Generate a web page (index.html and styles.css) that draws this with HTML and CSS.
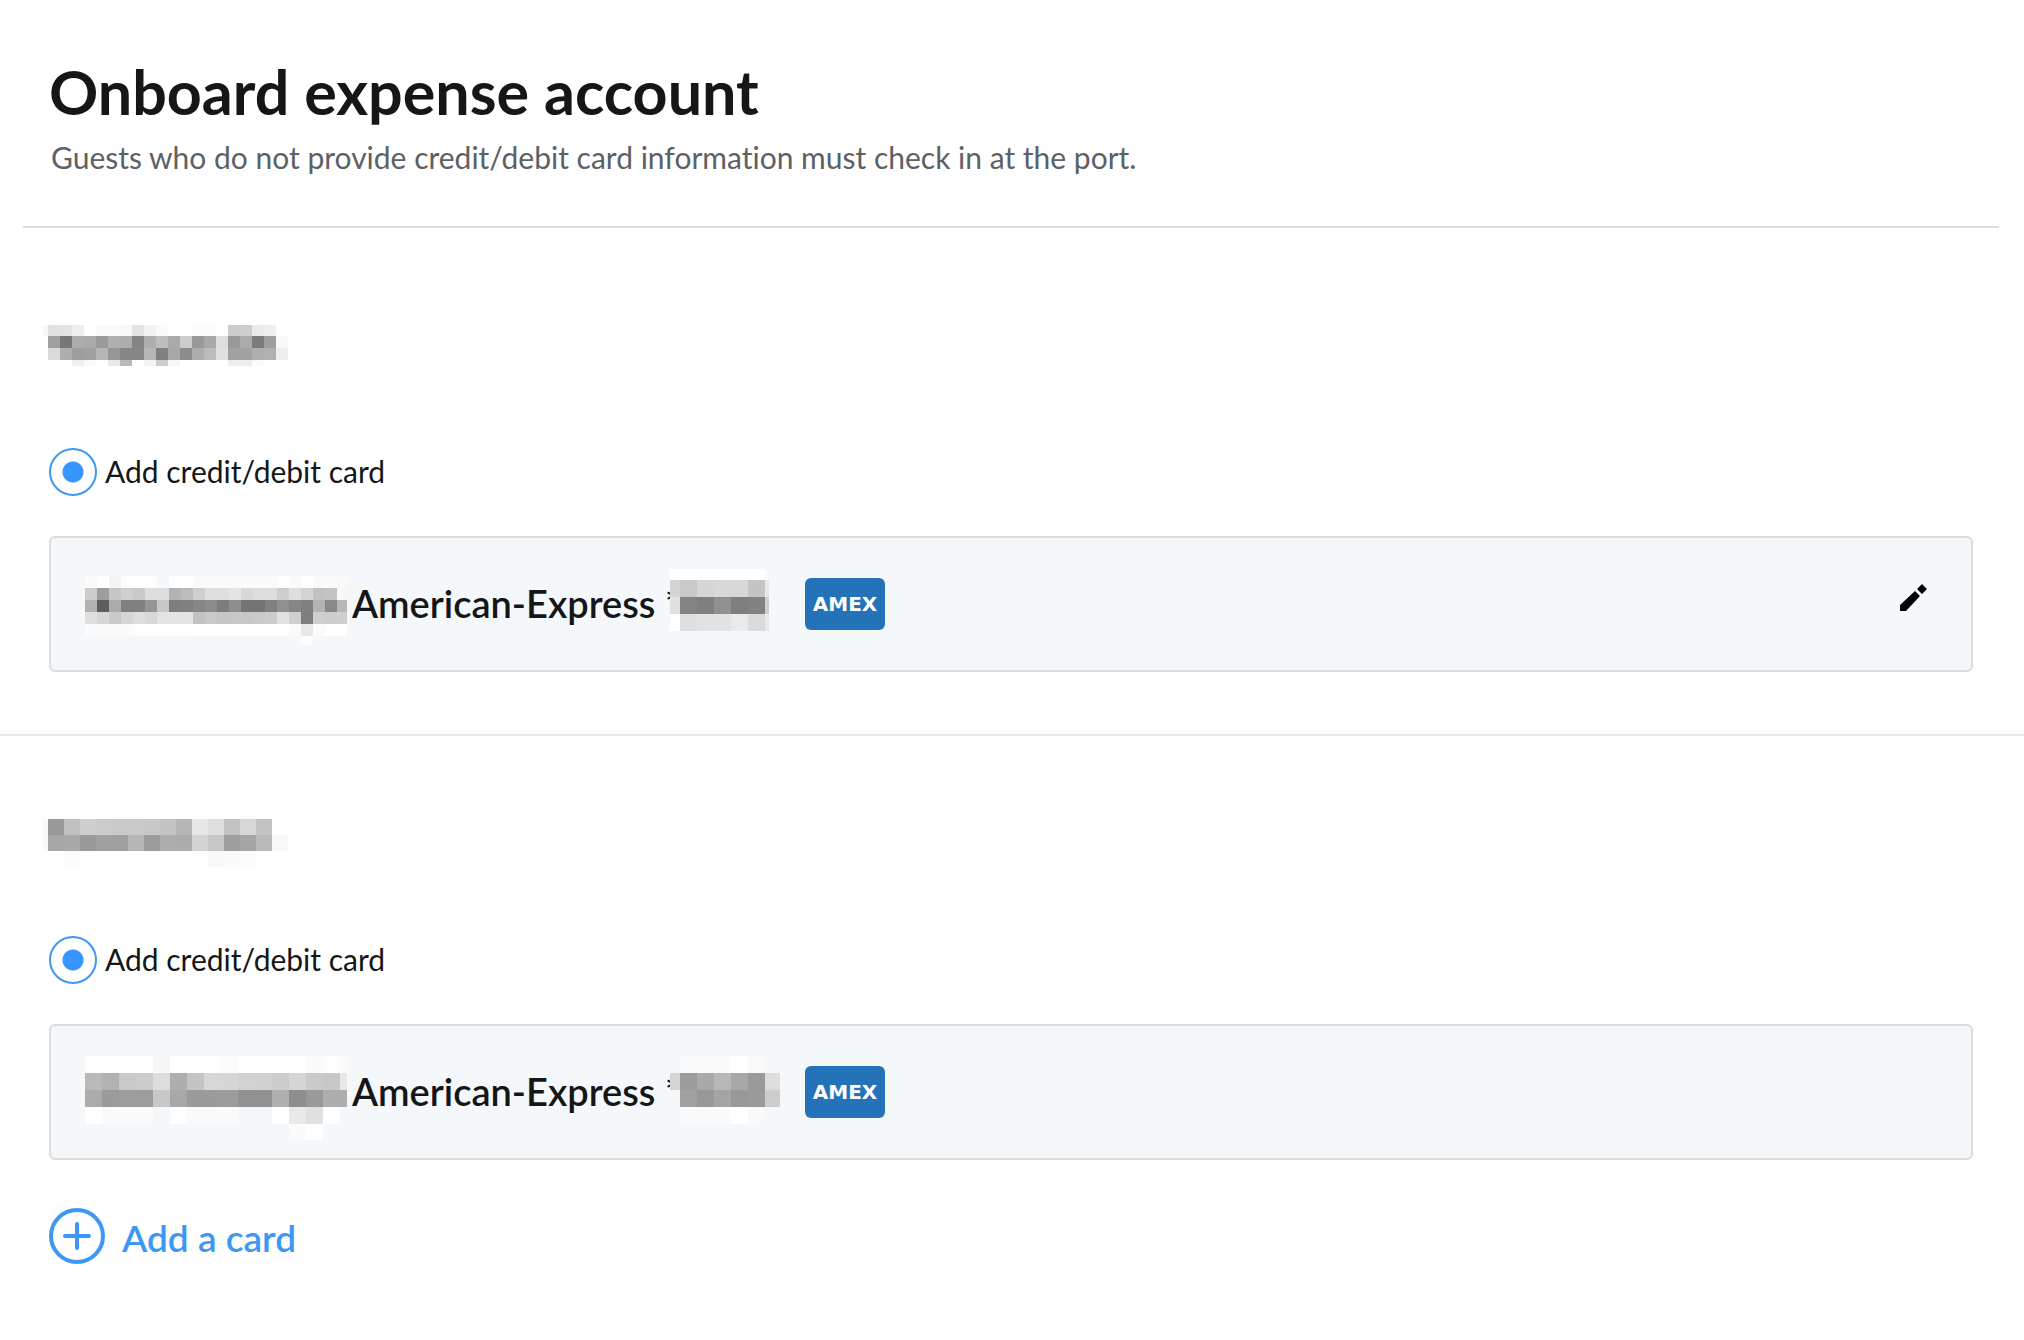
FILE: index.html
```html
<!DOCTYPE html>
<html lang="en">
<head>
  <meta charset="UTF-8">
  <title>Onboard expense account</title>
  <meta name="viewport" content="width=device-width, initial-scale=1.0">
  <link rel="stylesheet" href="styles.css">
</head>
<body>
  <!-- Header -->
<header class="page-header">
  <h1>Onboard expense account</h1>
  <p>Guests who do not provide credit/debit card information must check in at the port.</p>
</header>

<main>
  <!-- First guest -->
  <section class="guest">
    <h2 class="guest-name">
      <svg class="mosaic" width="245" height="41" data-id="name1"></svg>
    </h2>
    <label class="option">
      <input type="radio" name="guest1" checked>
      <span>Add credit/debit card</span>
    </label>
    <div class="card-row">
      <svg class="mosaic" width="262" height="81" data-id="holder1"></svg>
      <span class="card-name">American-Express *</span>
      <svg class="mosaic digits" width="110" height="70" data-id="digits1"></svg>
      <span class="badge">AMEX</span>
      <button class="edit" type="button" aria-label="Edit">
        <svg width="28" height="28" viewBox="0 0 28 28"><path d="M0 27v-6L15 7l5 5L6 27zM17 5l5-5 5 5-5 5z"/></svg>
      </button>
    </div>
  </section>

  <!-- Second guest -->
  <section class="guest">
    <h2 class="guest-name">
      <svg class="mosaic" width="245" height="54" data-id="name2"></svg>
    </h2>
    <label class="option">
      <input type="radio" name="guest2" checked>
      <span>Add credit/debit card</span>
    </label>
    <div class="card-row">
      <svg class="mosaic" width="262" height="96" data-id="holder2"></svg>
      <span class="card-name">American-Express *</span>
      <svg class="mosaic digits" width="110" height="72" data-id="digits2"></svg>
      <span class="badge">AMEX</span>
    </div>
    <button class="add-card" type="button">
      <svg width="56" height="56" viewBox="0 0 56 56"><circle cx="28" cy="28" r="26"/><path d="M28 16v24M16 28h24"/></svg>
      <span>Add a card</span>
    </button>
  </section>
</main>

<script src="script.js"></script>
</body>
</html>
```
FILE: styles.css
```css
* {
  box-sizing: border-box;
}

body {
  margin: 0;
  background: #fff;
  color: #141618;
  font-family: Lato, sans-serif;
  font-variant-ligatures: none;
}

  /*Header*/
.page-header {
  margin: 0 25px 20px 23px;
  padding: 58px 26px 49px;
  border-bottom: 2px solid #dcdcdc;
}

h1 {
  margin: 0;
  font-size: 61px;
  line-height: 68px;
}

.page-header p {
  margin: 11px 0 0;
  padding-left: 2px;
  color: #5c6164;
  font-size: 30px;
  line-height: 40px;
}

  /*Guests*/
.guest {
  padding: 60px 51px 62px 49px;
  border-bottom: 2px solid #e8e8e8;
}

.guest:last-child {
  border-bottom: 0;
}

.guest-name {
  height: 76px;
  margin: 0 0 64px -6px;
  padding-top: 17px;
}

.mosaic {
  display: block;
  flex: none;
}

.option {
  display: flex;
  align-items: center;
  gap: 8px;
  font-size: 30px;
  line-height: 40px;
}

.option span {
  padding-bottom: 2px;
}

.option input {
  appearance: none;
  width: 48px;
  height: 48px;
  margin: 0;
  border: 2px solid #3d97f5;
  border-radius: 50%;
  background: radial-gradient(circle, #3897ff 10px, transparent 11px);
}

.card-row {
  display: flex;
  align-items: center;
  height: 136px;
  margin-top: 40px;
  padding: 0 43px 0 34px;
  background: #f4f8fb;
  border: 2px solid #dcdcdc;
  border-radius: 6px;
}

.card-name {
  width: 324px;
  padding: 0 0 2px 5px;
  font-size: 38px;
  font-weight: 600;
  line-height: 48px;
  white-space: nowrap;
}

.digits {
  margin-left: -1px;
}

.badge {
  width: 80px;
  margin-left: 25px;
  border-radius: 6px;
  background: #2473b8;
  color: #fff;
  font: bold 20px/52px "DejaVu Sans", sans-serif;
  text-align: center;
}

.edit {
  margin-left: auto;
  padding: 0 0 12px;
  border: 0;
  background: none;
}

.edit svg {
  display: block;
}

.add-card {
  display: flex;
  align-items: center;
  gap: 17px;
  margin-top: 48px;
  padding: 0;
  border: 0;
  background: none;
  color: #3d97f5;
  font: 600 37px/48px Lato, sans-serif;
}

.add-card span {
  padding-top: 4px;
}

.add-card svg {
  fill: none;
  stroke: #3d97f5;
  stroke-width: 4;
  stroke-linecap: round;
}
```
FILE: script.js
```js
// Grey levels of each hidden text, one row per line ("--" leaves the cell empty)
const mosaics = {
  name1: { cell: 12, left: 5, top: 11, rows: [
    "f7 e2 e3 ef ff fa fa f8 e3 f2 fb ff ff fc fc ff cc ce ea f0 ff",
    "-- a0 78 ac aa 9a af ad 84 ae be aa cd 99 a9 de 99 ab 7b 9e f8",
    "-- db ae 9d a0 b5 97 86 86 b6 80 a8 8c ae bb e0 a1 a2 b0 b1 ee",
    "-- -- -- f0 fa -- e8 b9 -- f4 cc f7 -- -- -- -- ee ee fb -- --"
  ]},
  holder1: { cell: 12, left: 12, top: 12, rows: [
    "--",
    "fb ff f4 fe ff fd -- fe ff fa fb fb fa fb fa fa fe fa ff fa fb f9",
    "cc 9e c6 cf c9 dd dd b3 bb cf df df e4 d7 dd dd ce df d4 c1 c3 f8",
    "b1 5d ab 80 80 95 c8 7e 80 86 8c 7d 8e 74 74 80 8f 85 80 b3 88 b7",
    "de d6 ca d5 dd d9 e4 e4 e4 c2 c9 c6 c7 c7 c9 cc e2 cf 7e cf cd cf",
    "fb fb fb fb fd fd fd fd fd ff ff ff ff ff ff ff ff fb e8 fb ff ff",
    "-- -- -- -- -- -- -- -- -- -- -- -- -- -- -- -- -- -- fc -- -- --"
  ]},
  digits1: { cell: 17, left: 10, top: 11, last: 4, rows: [
    "ff ff ff ff ff ff --",
    "d4 c9 d6 d8 d8 c4 e8",
    "e0 83 7f 90 7e 82 cf",
    "ff df e2 e2 ea da e8"
  ]},
  name2: { cell: 16, left: 5, top: 6, rows: [
    "--",
    "f8 98 c0 cf cb c9 c9 c8 c4 b6 e7 df c2 d7 c2 fe",
    "f8 a6 a9 99 a0 a0 b6 9c ad ac d3 c7 9e a5 b9 f8",
    "-- -- fc -- -- -- -- -- -- -- -- f8 fb fc -- --"
  ]},
  holder2: { cell: 17, left: 17, top: 12, rows: [
    "--",
    "fd fd ff ff f6 ff ff ff fc ff ff ff fe fb fe fa",
    "b9 b2 ca cc dd ae c4 d7 d6 d2 d1 cb d6 ca c7 e8",
    "ab 9b 9d 9d c8 a8 9b 9b 9c 92 92 af 8e 9a ae ae",
    "fe fa fb fb -- fe fa fa fa -- -- ff e9 e0 fe --",
    "-- -- -- -- -- -- -- -- -- -- -- -- fb fe -- --"
  ]},
  digits2: { cell: 17, left: 10, top: 17, rows: [
    "-- fa fb fb ff fa --",
    "d5 9c a9 b8 a8 9a dd",
    "-- a1 98 a4 99 9b cd",
    "-- fa fa fb ff f9 --"
  ]}
};

document.querySelectorAll(".mosaic").forEach(svg => {
  const m = mosaics[svg.dataset.id];
  let html = "";
  m.rows.forEach((row, r) => {
    row.split(" ").forEach((g, c, cells) => {
      if (g === "--") return;
      const x = c ? m.left + (c - 1) * m.cell : 0;
      const y = r ? m.top + (r - 1) * m.cell : 0;
      let w = c ? m.cell : m.left;
      if (m.last && c === cells.length - 1) w = m.last;
      const h = r ? m.cell : m.top;
      html += `<rect x="${x}" y="${y}" width="${w}" height="${h}" fill="#${g}${g}${g}"/>`;
    });
  });
  svg.innerHTML = html;
});
```
